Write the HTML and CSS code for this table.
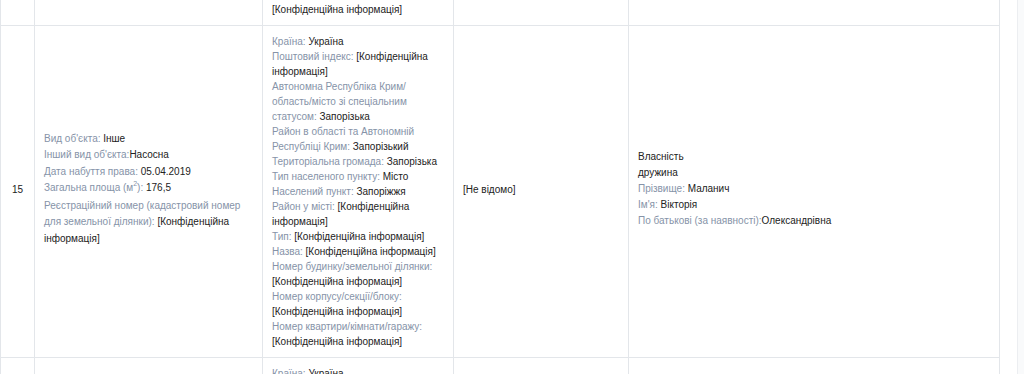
FILE: index.html
```html
<!DOCTYPE html>
<html lang="uk">
<head>
<meta charset="utf-8">
<link rel="stylesheet" href="styles.css">
</head>
<body>
<div class="page">
  <table class="decl">
    <colgroup>
      <col class="c-num"><col class="c-obj"><col class="c-addr"><col class="c-val"><col class="c-own">
    </colgroup>
    <tbody>
      <tr class="prev">
        <td></td>
        <td></td>
        <td class="addr"><div><span class="v">[Конфіденційна інформація]</span></div></td>
        <td></td>
        <td></td>
      </tr>
      <tr>
        <td class="num">15</td>
        <td class="obj">
          <div><span class="l">Вид об'єкта: </span><span class="v">Інше</span></div>
          <div><span class="l">Інший вид об'єкта:</span><span class="v">Насосна</span></div>
          <div><span class="l">Дата набуття права: </span><span class="v">05.04.2019</span></div>
          <div><span class="l">Загальна площа (м<sup>2</sup>): </span><span class="v">176,5</span></div>
          <div class="reg"><span class="l">Реєстраційний номер (кадастровий номер для земельної ділянки): </span><span class="v">[Конфіденційна інформація]</span></div>
        </td>
        <td class="addr">
          <div><span class="l">Країна: </span><span class="v">Україна</span></div>
          <div><span class="l">Поштовий індекс: </span><span class="v">[Конфіденційна інформація]</span></div>
          <div><span class="l">Автономна Республіка Крим/ область/місто зі спеціальним статусом: </span><span class="v">Запорізька</span></div>
          <div><span class="l">Район в області та Автономній Республіці Крим: </span><span class="v">Запорізький</span></div>
          <div><span class="l">Територіальна громада: </span><span class="v">Запорізька</span></div>
          <div><span class="l">Тип населеного пункту: </span><span class="v">Місто</span></div>
          <div><span class="l">Населений пункт: </span><span class="v">Запоріжжя</span></div>
          <div><span class="l">Район у місті: </span><span class="v">[Конфіденційна інформація]</span></div>
          <div><span class="l">Тип: </span><span class="v">[Конфіденційна інформація]</span></div>
          <div><span class="l">Назва: </span><span class="v">[Конфіденційна інформація]</span></div>
          <div><span class="l">Номер будинку/земельної ділянки: </span><span class="v">[Конфіденційна інформація]</span></div>
          <div><span class="l">Номер корпусу/секції/блоку: </span><span class="v">[Конфіденційна інформація]</span></div>
          <div><span class="l">Номер квартири/кімнати/гаражу: </span><span class="v">[Конфіденційна інформація]</span></div>
        </td>
        <td class="val"><span class="v">[Не відомо]</span></td>
        <td class="own">
          <div><span class="v">Власність</span></div>
          <div><span class="v">дружина</span></div>
          <div><span class="l">Прізвище: </span><span class="v">Маланич</span></div>
          <div><span class="l">Ім'я: </span><span class="v">Вікторія</span></div>
          <div><span class="l">По батькові (за наявності):</span><span class="v">Олександрівна</span></div>
        </td>
      </tr>
      <tr class="next">
        <td></td>
        <td></td>
        <td class="addr"><div><span class="l">Країна: </span><span class="v">Україна</span></div></td>
        <td></td>
        <td></td>
      </tr>
    </tbody>
  </table>
</div>
</body>
</html>
```

FILE: styles.css
```css
html, body {
  margin: 0;
  padding: 0;
}
body {
  background: #f9fafb;
  font-family: "Liberation Sans", Arial, sans-serif;
  font-size: 10px;
  color: #222;
  height: 374px;
  overflow: hidden;
}
.page {
  width: 1017px;
  height: 374px;
  background: #fff;
  border-right: 1px solid #eceef1;
}
.decl {
  border-collapse: collapse;
  table-layout: fixed;
  width: 999px;
}
.c-num { width: 34px; }
.c-obj { width: 228px; }
.c-addr { width: 191px; }
.c-val { width: 175px; }
.c-own { width: 371px; }
.decl td {
  border: 1px solid #e3e6ea;
  padding: 8px 9px 8px 9px;
  vertical-align: middle;
  line-height: 15px;
}
.decl .num,
.decl .obj,
.decl .val,
.decl .own {
  padding-bottom: 13px;
}
.decl .num {
  padding-left: 0;
  padding-right: 0;
  text-align: center;
  color: #222;
}
.decl .obj { line-height: 16.5px; }
.obj .reg { margin-top: 1px; }
.decl .own { line-height: 16px; }
.decl .prev td {
  border-top: 0;
  padding-top: 2px;
}
.decl .next td { vertical-align: top; }
.l { color: #8693a8; }
.v { color: #222; }
sup {
  font-size: 7px;
  line-height: 0;
  vertical-align: 5px;
}
```
